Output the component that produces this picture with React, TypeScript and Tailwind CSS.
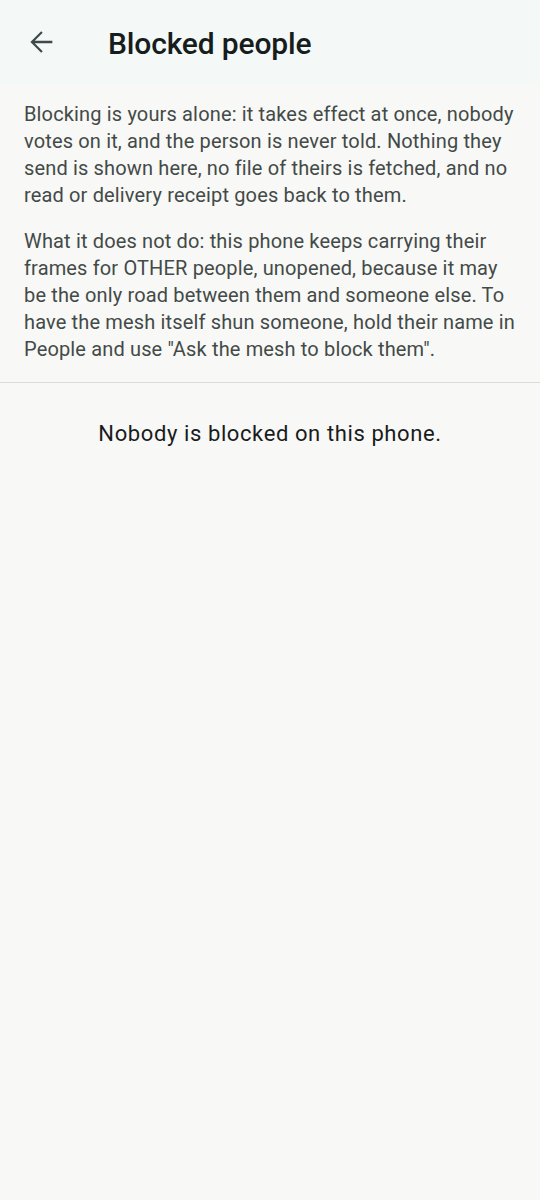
export default function App() {
  return (
    <div className="min-h-[1200px] bg-[#f8f8f6] font-['Roboto',sans-serif]">
      {/* Top bar */}
      <header className="flex h-[84px] items-center bg-[#f4f9f8]">
        <button className="ml-[17px] flex h-12 w-12 items-center justify-center text-[#3f4947]" aria-label="Back">
          <svg width="34" height="34" viewBox="0 0 24 24" fill="currentColor">
            <path d="M20 11.1H7.6l5.6-5.6L12.1 4.4 4.5 12l7.6 7.6 1.1-1.1-5.6-5.6H20v-1.8z" />
          </svg>
        </button>
        <h1 className="ml-[43px] pt-[2px] text-[30px] font-medium tracking-[-0.15px] text-[#161d1c]">Blocked people</h1>
      </header>

      {/* Explanation */}
      <div className="px-6 pt-[17px] pb-[19px] text-[20px] leading-[27px] tracking-[0.15px] text-[#434a48]">
        <p>
          Blocking is yours alone: it takes effect at once, nobody votes on it, and the person is never told. Nothing
          they send is shown here, no file of theirs is fetched, and no read or delivery receipt goes back to them.
        </p>
        <p className="mt-[19px]">
          What it does not do: this phone keeps carrying their frames for OTHER people, unopened, because it may be
          the only road between them and someone else. To have the mesh itself shun someone, hold their name in
          People and use "Ask the mesh to block them".
        </p>
      </div>

      <div className="h-px bg-[#d9dedc]" />

      <p className="pt-[37px] text-center text-[22px] leading-7 tracking-[0.6px] text-[#191c1c]">
        Nobody is blocked on this phone.
      </p>
    </div>
  )
}
